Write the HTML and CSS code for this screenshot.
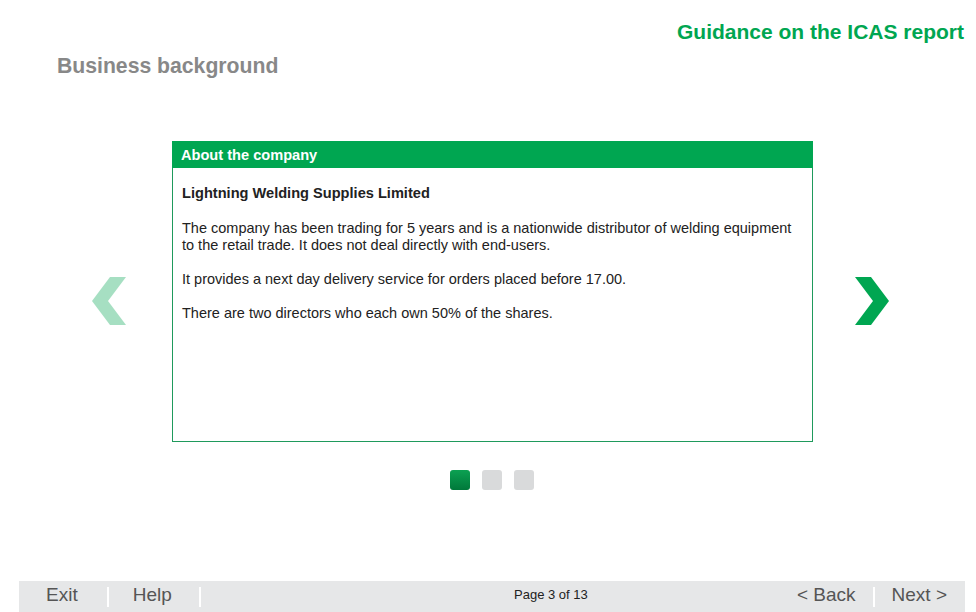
FILE: index.html
```html
<!DOCTYPE html>
<html lang="en">
<head>
    <meta charset="UTF-8">
    <title>Guidance on the ICAS report</title>
    <link rel="stylesheet" href="styles.css">
</head>
<body>

<div class="page">
    <div class="top">
        <h1 class="report-title">Guidance on the ICAS report</h1>
        <h2 class="section-title">Business background</h2>
    </div>

    <!-- Карусель со слайдами -->
    <div class="slider">
        <div class="arrow arrow-prev">
            <svg width="34" height="48" viewBox="0 0 34 48"><polygon points="18,0 34,0 16,24 34,48 18,48 0,24" fill="#a6dfc2"/></svg>
        </div>

        <div class="card">
            <div class="card-head">About the company</div>
            <div class="card-body">
                <p class="company">Lightning Welding Supplies Limited</p>
                <p>The company has been trading for 5 years and is a nationwide distributor of welding equipment to the retail trade. It does not deal directly with end-users.</p>
                <p>It provides a next day delivery service for orders placed before 17.00.</p>
                <p>There are two directors who each own 50% of the shares.</p>
            </div>
        </div>

        <div class="arrow arrow-next">
            <svg width="34" height="48" viewBox="0 0 34 48"><polygon points="0,0 16,0 34,24 16,48 0,48 18,24" fill="#00a651"/></svg>
        </div>
    </div>

    <div class="dots">
        <span class="dot active"></span>
        <span class="dot"></span>
        <span class="dot"></span>
    </div>

    <!-- Нижняя панель навигации -->
    <div class="footer">
        <div class="footer-left">
            <span class="nav-link exit">Exit</span>
            <span class="sep"></span>
            <span class="nav-link help">Help</span>
            <span class="sep"></span>
        </div>
        <div class="page-num">Page 3 of 13</div>
        <div class="footer-right">
            <span class="nav-link">&lt; Back</span>
            <span class="sep"></span>
            <span class="nav-link">Next &gt;</span>
        </div>
    </div>
</div>

</body>
</html>
```

FILE: styles.css
```css
body {
    margin: 0;
    font-family: "Liberation Sans", Arial, sans-serif;
    background: #fff;
    color: #222;
}
.page {
    width: 976px;
    height: 612px;
    display: flex;
    flex-direction: column;
    overflow: hidden;
}
.top {
    padding: 18px 12px 0 57px;
}
.report-title {
    margin: 0;
    text-align: right;
    font-size: 21px;
    line-height: 28px;
    color: #00a651;
}
.section-title {
    margin: 6px 0 0 0;
    font-size: 21.2px;
    line-height: 28px;
    color: #888;
}
.slider {
    display: flex;
    align-items: center;
    margin-top: 61px;
    padding-left: 92px;
}
.arrow {
    width: 34px;
    height: 48px;
    display: flex;
    margin-top: 18px;
}
.arrow-prev {
    margin-right: 46px;
}
.arrow-next {
    margin-left: 42px;
}
.card {
    width: 639px;
    height: 299px;
    border: 1px solid #1f9a5c;
    display: flex;
    flex-direction: column;
}
.card-head {
    background: #00a651;
    color: #fff;
    font-weight: bold;
    font-size: 14.6px;
    height: 27px;
    line-height: 29px;
    padding-left: 9px;
    margin: -1px -1px 0 -1px;
}
.card-body {
    padding: 17px 9px 0 9px;
    font-size: 14.5px;
    line-height: 17px;
}
.card-body p {
    margin: 0 0 17px 0;
}
.card-body .company {
    font-weight: bold;
    font-size: 14.6px;
    margin-bottom: 18px;
}
.dots {
    display: flex;
    gap: 12px;
    justify-content: center;
    margin-top: 28px;
    padding-left: 8px;
}
.dot {
    width: 20px;
    height: 20px;
    border-radius: 3px;
    background: #d9dadb;
}
.dot.active {
    background: linear-gradient(#0ca152, #00783a);
}
.footer {
    margin: auto 11px 0 19px;
    height: 31px;
    background: #e6e7e8;
    display: flex;
    align-items: center;
    position: relative;
}
.footer-left,
.footer-right {
    display: flex;
    align-items: center;
}
.footer-right {
    margin-left: auto;
    padding-right: 18px;
}
.nav-link {
    font-size: 19px;
    color: #555;
    padding-bottom: 3px;
}
.exit {
    margin-left: 27px;
    margin-right: 29px;
}
.help {
    margin-left: 24px;
    margin-right: 27px;
}
.sep {
    width: 2px;
    height: 20px;
    background: #fff;
}
.footer-right .sep {
    margin: 0 17px 0 19px;
}
.footer-right .nav-link:first-child {
    margin-right: -2px;
}
.page-num {
    position: absolute;
    left: 495px;
    top: 6px;
    font-size: 13px;
    color: #222;
}
```
